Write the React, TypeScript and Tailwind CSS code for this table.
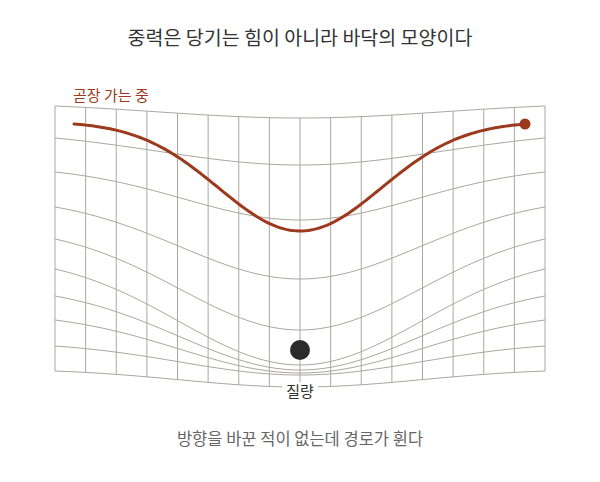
const LEFT = 55;
const RIGHT = 545;
const MID = 300;

// base y at the edge, depth of the dip at the centre, width of the dip
const ROWS: [number, number, number][] = [
  [106, 12, 200],
  [138, 27, 200],
  [172, 48, 165],
  [207, 72, 170],
  [239, 91, 170],
  [269, 96, 170],
  [296, 74, 170],
  [320, 53, 170],
  [346, 29, 170],
  [371, 16, 170],
];

const bell = (dx: number, w: number) => Math.exp(-((dx / w) * (dx / w)));

function dip(x: number, w: number) {
  const edge = bell(RIGHT - MID, w);
  return (bell(x - MID, w) - edge) / (1 - edge);
}

function rowY(i: number, x: number) {
  const [base, depth, w] = ROWS[i];
  return base + depth * dip(x, w);
}

function rowPath(i: number) {
  const pts: string[] = [];
  for (let x = LEFT; x <= RIGHT; x += 5) {
    pts.push(`${x},${rowY(i, x).toFixed(2)}`);
  }
  return "M" + pts.join(" L");
}

function pathCurve() {
  const e0 = bell(226, 115);
  const pts: string[] = [];
  for (let x = 74; x <= 525; x += 3) {
    const h = (bell(x - MID, 115) - e0) / (1 - e0);
    pts.push(`${x},${(124 + 107 * h).toFixed(2)}`);
  }
  pts.push(`525,124`);
  return "M" + pts.join(" L");
}

const COLS = Array.from({ length: 17 }, (_, j) => LEFT + j * ((RIGHT - LEFT) / 16));

function Surface() {
  return (
    <svg width={600} height={346} viewBox="0 64 600 346" className="mt-[15px] block">
      <g fill="none" stroke="#aba7a2" strokeWidth={1}>
        {ROWS.map((_, i) => (
          <path key={i} d={rowPath(i)} />
        ))}
        {COLS.map((x) => (
          <line key={x} x1={x} x2={x} y1={rowY(0, x)} y2={rowY(ROWS.length - 1, x)} />
        ))}
      </g>
      <path d={pathCurve()} fill="none" stroke="#9b3a1d" strokeWidth={3} strokeLinecap="round" />
      <circle cx={525} cy={124} r={5.5} fill="#9b3a1d" />
      <circle cx={300} cy={350} r={10} fill="#2b2b2b" />
      <rect x={282} y={382} width={36} height={20} fill="#ffffff" />
      <text x={300} y={397} textAnchor="middle" fontSize={15} fill="#333333">
        질량
      </text>
      <text x={73} y={101} fontSize={15} fill="#9b3a1d">
        곧장 가는 중
      </text>
    </svg>
  );
}

export default function App() {
  return (
    <div className="flex h-[482px] w-[600px] flex-col items-center bg-white font-['Noto_Sans_CJK_KR','Noto_Sans',sans-serif]">
      <h1 className="mt-[25px] text-[19.5px] leading-[24px] font-normal text-[#333333]">
        중력은 당기는 힘이 아니라 바닥의 모양이다
      </h1>
      <Surface />
      <p className="mt-[18px] text-[16.5px] leading-[20px] text-[#666666]">
        방향을 바꾼 적이 없는데 경로가 휜다
      </p>
    </div>
  );
}
